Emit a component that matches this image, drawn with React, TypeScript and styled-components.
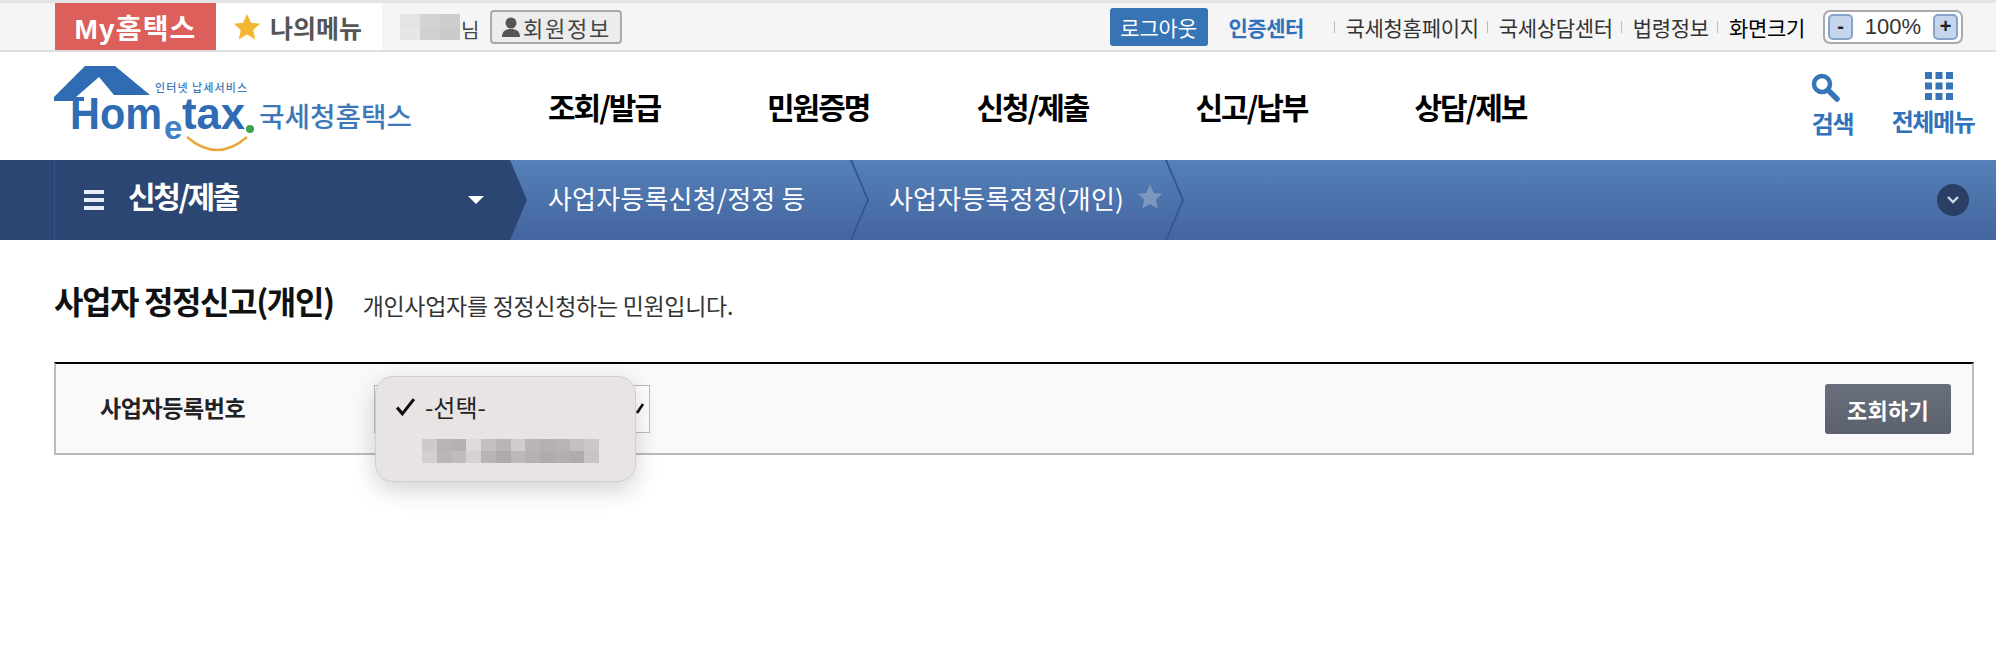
import styled, { createGlobalStyle } from 'styled-components'

const GlobalStyle = createGlobalStyle`
    html, body {
        margin: 0;
        padding: 0;
        background: #fff;
    }
    body {
        font-family: "Noto Sans CJK KR", "Noto Sans", sans-serif;
        color: #111;
    }
`

const nameBlur = ['#e4e4e4', '#d4d4d4', '#cdcdcd', '#e6e6e6', '#d0d0d0', '#cbcbcb']
const bizBlur = [
    '#cfcaca', '#b8b4b4', '#b5b1b1', '#e0dbdb', '#c4c0c0', '#b9b5b5', '#d0cccc', '#bab6b6', '#b5b1b1', '#b8b4b4', '#c4c0c0', '#cbc7c7',
    '#d5d0d0', '#bab6b6', '#c0bcbc', '#d6d2d2', '#b8b4b4', '#afabab', '#bcb8b8', '#b5b1b1', '#afabab', '#b3afaf', '#b0acac', '#c8c4c4',
]

export default function App() {
    return (
        <Page>
            <GlobalStyle />
            <TopBar>
                <TopLeft>
                    <MyTab>My홈택스</MyTab>
                    <MenuTab>
                        <svg width="30" height="30" viewBox="0 0 24 24">
                            <path d="M12 1.5l3.2 7 7.3.8-5.5 5 1.6 7.6L12 18l-6.6 3.9L7 14.3l-5.5-5 7.3-.8z" fill="#f2b632" />
                        </svg>
                        나의메뉴
                    </MenuTab>
                    <NameBlur>
                        {nameBlur.map((c, i) => (
                            <span key={i} style={{ background: c }} />
                        ))}
                    </NameBlur>
                    <Sir>님</Sir>
                    <MemberButton>
                        <svg width="20" height="22" viewBox="0 0 20 22">
                            <circle cx="10" cy="7" r="5.5" fill="#555" />
                            <path d="M1 21c0-6 4-8 9-8s9 2 9 8z" fill="#555" />
                        </svg>
                        회원정보
                    </MemberButton>
                </TopLeft>
                <TopRight>
                    <LogoutButton>로그아웃</LogoutButton>
                    <CertLink>인증센터</CertLink>
                    <UtilLink $divider>국세청홈페이지</UtilLink>
                    <UtilLink $divider>국세상담센터</UtilLink>
                    <UtilLink $divider>법령정보</UtilLink>
                    <UtilLink $divider $dark>화면크기</UtilLink>
                    <ZoomBox>
                        <ZoomButton>-</ZoomButton>
                        <ZoomValue>100%</ZoomValue>
                        <ZoomButton>+</ZoomButton>
                    </ZoomBox>
                </TopRight>
            </TopBar>

            <Header>
                <svg width="370" height="108" viewBox="0 0 370 108">
                    <path
                        d="M0 45 L31 14 H61 L96 43 H60 L45 25 L22 45 H30 V49 H0z"
                        fill="#2f6cb3"
                    />
                    <text x="16" y="77" fontFamily="Liberation Sans" fontWeight="700" fontSize="44" fill="#2f6cb3" textLength="92" lengthAdjust="spacingAndGlyphs">Hom</text>
                    <text x="110" y="87" fontFamily="Liberation Sans" fontWeight="700" fontSize="33" fill="#3f82c4">e</text>
                    <text x="128" y="77" fontFamily="Liberation Sans" fontWeight="700" fontSize="44" fill="#2f6cb3" textLength="63" lengthAdjust="spacingAndGlyphs">tax</text>
                    <circle cx="196" cy="77" r="4" fill="#3fa34d" />
                    <path d="M133 85 Q163 111 193 85" fill="none" stroke="#eaa83f" strokeWidth="2.5" />
                    <text x="101" y="40" fontSize="11" fontWeight="500" fill="#3f78b8" textLength="92">인터넷 납세서비스</text>
                    <text x="205" y="75" fontSize="27" fontWeight="500" fill="#3f78b8" textLength="153" lengthAdjust="spacingAndGlyphs">국세청홈택스</text>
                </svg>
                <MainNav>
                    <NavItem>조회/발급</NavItem>
                    <NavItem>민원증명</NavItem>
                    <NavItem>신청/제출</NavItem>
                    <NavItem>신고/납부</NavItem>
                    <NavItem>상담/제보</NavItem>
                </MainNav>
                <HeaderTools>
                    <ToolItem $width={43}>
                        <ToolIcon width="30" height="30" viewBox="0 0 30 30" $shift={-16}>
                            <circle cx="12" cy="12" r="8" fill="none" stroke="#3575b8" strokeWidth="4.5" />
                            <path d="M18 18l9 9" stroke="#3575b8" strokeWidth="5.5" strokeLinecap="round" />
                        </ToolIcon>
                        검색
                    </ToolItem>
                    <ToolItem $width={82}>
                        <ToolIcon width="28" height="28" viewBox="0 0 28 28" fill="#3575b8" $shift={12}>
                            {[0, 10.5, 21].map(y =>
                                [0, 10.5, 21].map(x => (
                                    <rect key={`${x}-${y}`} x={x} y={y} width="7" height="7" />
                                ))
                            )}
                        </ToolIcon>
                        전체메뉴
                    </ToolItem>
                </HeaderTools>
            </Header>

            <LocationBar>
                <MenuSection>
                    <Hamburger>
                        <span />
                        <span />
                        <span />
                    </Hamburger>
                    <SectionTitle>신청/제출</SectionTitle>
                    <Caret />
                </MenuSection>
                <svg width="18" height="80" viewBox="0 0 18 80">
                    <path d="M0 0 L17 40 L0 80z" fill="#2b4672" />
                </svg>
                <Crumb $width={322}>사업자등록신청/정정 등</Crumb>
                <CrumbArrow />
                <Crumb $width={296}>
                    사업자등록정정(개인)
                    <CrumbStar viewBox="0 0 24 24">
                        <path d="M12 1.5l3.2 7 7.3.8-5.5 5 1.6 7.6L12 18l-6.6 3.9L7 14.3l-5.5-5 7.3-.8z" fill="#7f97bd" />
                    </CrumbStar>
                </Crumb>
                <CrumbArrow />
                <CollapseButton>
                    <svg width="14" height="10" viewBox="0 0 14 10">
                        <path d="M2 2l5 5 5-5" fill="none" stroke="#cfd8e6" strokeWidth="2.4" />
                    </svg>
                </CollapseButton>
            </LocationBar>

            <Content>
                <TitleRow>
                    <PageTitle>사업자 정정신고(개인)</PageTitle>
                    <PageDesc>개인사업자를 정정신청하는 민원입니다.</PageDesc>
                </TitleRow>
                <SearchBox>
                    <FieldLabel>사업자등록번호</FieldLabel>
                    <SelectWrap>
                        <SelectBox>
                            <svg width="12" height="14" viewBox="0 0 12 14">
                                <path d="M2 11l6-9" stroke="#111" strokeWidth="2.6" />
                            </svg>
                        </SelectBox>
                        <Popup>
                            <PopupRow>
                                <svg width="21" height="21" viewBox="0 0 20 20">
                                    <path d="M2 11l5 6L18 3" fill="none" stroke="#111" strokeWidth="3" />
                                </svg>
                                -선택-
                            </PopupRow>
                            <PopupBlur>
                                {bizBlur.map((c, i) => (
                                    <span key={i} style={{ background: c }} />
                                ))}
                            </PopupBlur>
                        </Popup>
                    </SelectWrap>
                    <SearchButton>조회하기</SearchButton>
                </SearchBox>
            </Content>
        </Page>
    )
}

const Page = styled.div`
    width: 1996px;
    height: 664px;
    overflow: hidden;
    background: #fff;
`

const TopBar = styled.div`
    height: 47px;
    padding: 0 33px 0 55px;
    display: flex;
    align-items: center;
    justify-content: space-between;
    background: #f5f5f5;
    border-top: 3px solid #e3e3e8;
    border-bottom: 2px solid #dedede;
`

const TopLeft = styled.div`
    display: flex;
    align-items: center;
    height: 100%;
`

const MyTab = styled.div`
    width: 161px;
    height: 100%;
    display: flex;
    align-items: center;
    justify-content: center;
    box-sizing: border-box;
    background: #dc5f5b;
    color: #fff;
    font-size: 28px;
    font-weight: 700;
    letter-spacing: 1.2px;
    font-family: "Liberation Sans", "Noto Sans CJK KR", sans-serif;
    white-space: nowrap;
`

const MenuTab = styled.div`
    width: 166px;
    height: 100%;
    padding-left: 16px;
    box-sizing: border-box;
    display: flex;
    align-items: center;
    gap: 8px;
    background: #fff;
    color: #555;
    font-size: 25px;
    font-weight: 700;
    letter-spacing: 0;
    white-space: nowrap;
`

const NameBlur = styled.div`
    width: 60px;
    height: 26px;
    margin-left: 18px;
    display: grid;
    grid-template-columns: repeat(3, 1fr);
    grid-template-rows: repeat(2, 1fr);
`

const Sir = styled.span`
    width: 20px;
    margin-left: 1px;
    padding-top: 6px;
    font-size: 20px;
    color: #444;
`

const MemberButton = styled.div`
    width: 132px;
    height: 34px;
    margin-left: 9px;
    box-sizing: border-box;
    display: flex;
    align-items: center;
    justify-content: center;
    gap: 2px;
    background: #ececec;
    border: 2px solid #aaa;
    border-radius: 4px;
    color: #444;
    font-size: 22px;
    letter-spacing: 1.8px;
    white-space: nowrap;
`

const TopRight = styled.div`
    display: flex;
    align-items: center;
`

const LogoutButton = styled.div`
    width: 98px;
    height: 38px;
    display: flex;
    align-items: center;
    justify-content: center;
    background: #3674b5;
    border-radius: 3px;
    color: #fff;
    font-size: 21px;
    letter-spacing: -0.2px;
    white-space: nowrap;
`

const CertLink = styled.span`
    width: 76px;
    margin: 0 21px;
    color: #2f72bb;
    font-size: 21px;
    font-weight: 700;
    letter-spacing: -0.5px;
    white-space: nowrap;
`

const UtilLink = styled.span<{ $divider?: boolean; $dark?: boolean }>`
    position: relative;
    padding-left: 20px;
    color: ${p => (p.$dark ? '#000' : '#333')};
    font-size: 21px;
    letter-spacing: -0.3px;
    white-space: nowrap;
    &::before {
        content: '';
        display: ${p => (p.$divider ? 'block' : 'none')};
        position: absolute;
        left: 8px;
        top: 9px;
        bottom: 9px;
        width: 1px;
        background: #bbb;
    }
`

const ZoomBox = styled.div`
    width: 140px;
    height: 34px;
    margin-left: 18px;
    padding: 0 3px;
    box-sizing: border-box;
    display: flex;
    align-items: center;
    justify-content: space-between;
    background: #fff;
    border: 2px solid #aaa;
    border-radius: 7px;
`

const ZoomButton = styled.div`
    width: 25px;
    height: 26px;
    box-sizing: border-box;
    display: flex;
    align-items: center;
    justify-content: center;
    background: #c5d5ec;
    border: 2px solid #86a3cc;
    border-radius: 5px;
    color: #222;
    font-size: 20px;
    font-weight: 700;
    font-family: "Liberation Sans", sans-serif;
`

const ZoomValue = styled.span`
    color: #333;
    font-size: 22px;
    font-family: "Liberation Sans", sans-serif;
`

const Header = styled.header`
    height: 108px;
    padding-left: 54px;
    display: flex;
    align-items: center;
`

const MainNav = styled.nav`
    margin-left: 124px;
    display: flex;
    gap: 107px;
`

const NavItem = styled.a`
    color: #000;
    font-size: 30px;
    font-weight: 700;
    letter-spacing: -2px;
    white-space: nowrap;
`

const HeaderTools = styled.div`
    margin-left: auto;
    margin-right: 22px;
    display: flex;
    gap: 38px;
`

const ToolItem = styled.div<{ $width: number }>`
    width: ${p => p.$width}px;
    display: flex;
    flex-direction: column;
    align-items: center;
    gap: 6px;
    color: #2f72bb;
    font-size: 24px;
    font-weight: 700;
    letter-spacing: -1.4px;
    line-height: 30px;
    white-space: nowrap;
`

const ToolIcon = styled.svg<{ $shift: number }>`
    margin-left: ${p => p.$shift}px;
    margin-top: -3px;
`

const LocationBar = styled.div`
    height: 80px;
    display: flex;
    align-items: center;
    background: linear-gradient(#5580b8, #44659f);
    padding-right: 27px;
`

const MenuSection = styled.div`
    width: 510px;
    height: 100%;
    padding-left: 84px;
    box-sizing: border-box;
    display: flex;
    align-items: center;
    background: linear-gradient(to right, #2b4672 54px, #34548a 54px, #34548a 55px, #2b4672 55px);
`

const Hamburger = styled.div`
    width: 20px;
    display: flex;
    flex-direction: column;
    gap: 4px;
    span {
        height: 4px;
        background: #e8ecf3;
    }
`

const SectionTitle = styled.div`
    margin-left: 24px;
    margin-top: -11px;
    color: #fff;
    font-size: 30px;
    font-weight: 700;
    letter-spacing: -2.4px;
    white-space: nowrap;
`

const Caret = styled.div`
    margin-left: auto;
    margin-right: 26px;
    width: 0;
    height: 0;
    border-left: 8px solid transparent;
    border-right: 8px solid transparent;
    border-top: 8px solid #fff;
`

const Crumb = styled.div<{ $width: number }>`
    width: ${p => p.$width}px;
    padding: 0 0 6px 20px;
    box-sizing: border-box;
    display: flex;
    align-items: center;
    color: #fff;
    font-size: 26px;
    letter-spacing: 0.2px;
    white-space: nowrap;
`

const CrumbArrow = styled.div`
    width: 19px;
    height: 80px;
    background: #34568b;
    clip-path: polygon(0 0, 2px 0, 100% 50%, 2px 100%, 0 100%, calc(100% - 2px) 50%);
`

const CrumbStar = styled.svg`
    width: 28px;
    height: 28px;
    margin-left: 12px;
    flex-shrink: 0;
`

const CollapseButton = styled.div`
    margin-left: auto;
    width: 32px;
    height: 32px;
    display: flex;
    align-items: center;
    justify-content: center;
    border-radius: 50%;
    background: #2b3f66;
`

const Content = styled.main`
    padding: 0 22px 0 54px;
`

const TitleRow = styled.div`
    height: 122px;
    box-sizing: border-box;
    display: flex;
    align-items: center;
    gap: 29px;
`

const PageTitle = styled.h2`
    margin: -2px 0 0;
    color: #111;
    font-size: 32px;
    font-weight: 700;
    letter-spacing: -1.4px;
    white-space: nowrap;
`

const PageDesc = styled.p`
    margin: 8px 0 0;
    color: #333;
    font-size: 23px;
    letter-spacing: -0.3px;
    white-space: nowrap;
`

const SearchBox = styled.div`
    height: 93px;
    box-sizing: border-box;
    display: flex;
    align-items: center;
    padding: 0 21px 0 44px;
    background: #f9f9f9;
    border: 2px solid #bbb;
    border-top: 2px solid #000;
`

const FieldLabel = styled.div`
    width: 274px;
    padding-bottom: 4px;
    color: #222;
    font-size: 23px;
    font-weight: 700;
    letter-spacing: -0.4px;
`

const SelectWrap = styled.div`
    position: relative;
    width: 276px;
    height: 48px;
`

const SelectBox = styled.div`
    height: 100%;
    box-sizing: border-box;
    display: flex;
    align-items: center;
    justify-content: flex-end;
    padding-right: 2px;
    background: #fff;
    border: 1px solid #bbb;
`

const Popup = styled.div`
    position: absolute;
    left: 1px;
    top: -9px;
    width: 261px;
    height: 106px;
    box-sizing: border-box;
    padding: 16px 0 0 19px;
    background: #e9e4e4;
    border: 1px solid #d2cece;
    border-radius: 18px;
    box-shadow: 0 8px 24px rgba(0, 0, 0, 0.18);
`

const PopupRow = styled.div`
    display: flex;
    align-items: center;
    gap: 9px;
    color: #222;
    font-size: 24px;
    line-height: 28px;
`

const PopupBlur = styled.div`
    width: 177px;
    height: 24px;
    margin: 18px 0 0 27px;
    display: grid;
    grid-template-columns: repeat(12, 1fr);
    grid-template-rows: repeat(2, 1fr);
`

const SearchButton = styled.button`
    width: 126px;
    height: 50px;
    margin-left: auto;
    padding: 0;
    background: linear-gradient(#686e7a, #5b626e);
    border: none;
    border-radius: 3px;
    color: #fff;
    font-family: inherit;
    font-size: 22px;
    font-weight: 700;
    letter-spacing: 0.2px;
`
